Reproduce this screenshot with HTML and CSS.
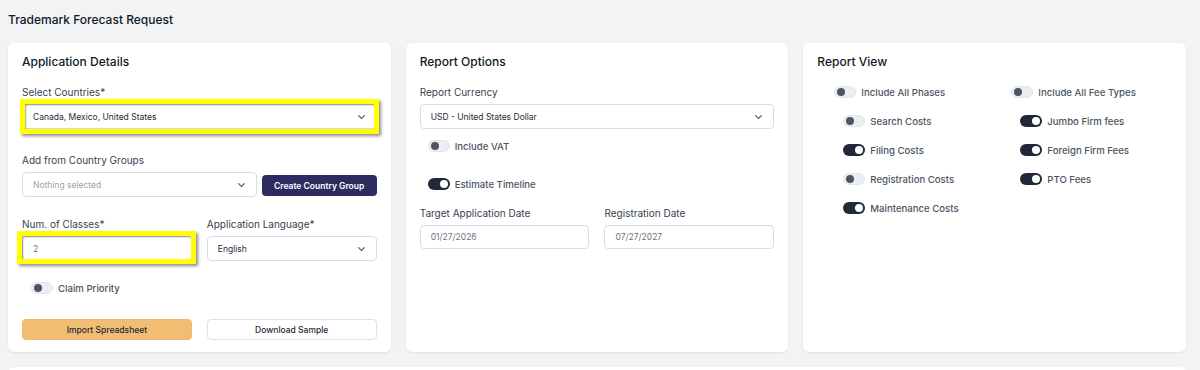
FILE: index.html
```html
<!DOCTYPE html>
<html>
<head>
<meta charset="utf-8">
<link rel="stylesheet" href="styles.css">
</head>
<body>
<div class="page">
  <h1 class="page-title">Trademark Forecast Request</h1>
  <div class="cards">
    <section class="card">
      <h2 class="card-title">Application Details</h2>
      <div class="field f-countries">
        <label class="label">Select Countries*</label>
        <div class="hl-wrap">
          <div class="select"><span>Canada, Mexico, United States</span><svg class="chev" viewBox="0 0 10 6"><path d="M1.5 1.2 5 4.6 8.5 1.2"/></svg></div>
          <div class="hl hl-a"></div>
        </div>
      </div>
      <div class="field f-groups">
        <label class="label">Add from Country Groups</label>
        <div class="row-groups">
          <div class="select grow"><span class="placeholder">Nothing selected</span><svg class="chev" viewBox="0 0 10 6"><path d="M1.5 1.2 5 4.6 8.5 1.2"/></svg></div>
          <button class="btn btn-navy">Create Country Group</button>
        </div>
      </div>
      <div class="two-col f-classes">
        <div class="field">
          <label class="label">Num. of Classes*</label>
          <div class="hl-wrap">
            <div class="input"><span class="val">2</span></div>
            <div class="hl hl-b"></div>
          </div>
        </div>
        <div class="field">
          <label class="label">Application Language*</label>
          <div class="select"><span>English</span><svg class="chev" viewBox="0 0 10 6"><path d="M1.5 1.2 5 4.6 8.5 1.2"/></svg></div>
        </div>
      </div>
      <div class="toggle-row f-claim"><span class="tg off"></span><span class="tg-label">Claim Priority</span></div>
      <div class="two-col f-buttons">
        <button class="btn btn-orange">Import Spreadsheet</button>
        <button class="btn btn-outline">Download Sample</button>
      </div>
    </section>

    <section class="card">
      <h2 class="card-title">Report Options</h2>
      <div class="field f-countries">
        <label class="label">Report Currency</label>
        <div class="select"><span>USD - United States Dollar</span><svg class="chev" viewBox="0 0 10 6"><path d="M1.5 1.2 5 4.6 8.5 1.2"/></svg></div>
      </div>
      <div class="toggle-row f-vat"><span class="tg off"></span><span class="tg-label">Include VAT</span></div>
      <div class="toggle-row f-timeline"><span class="tg on"></span><span class="tg-label">Estimate Timeline</span></div>
      <div class="two-col f-dates">
        <div class="field">
          <label class="label">Target Application Date</label>
          <div class="input date"><span class="val">01/27/2026</span></div>
        </div>
        <div class="field">
          <label class="label">Registration Date</label>
          <div class="input date"><span class="val">07/27/2027</span></div>
        </div>
      </div>
    </section>

    <section class="card">
      <h2 class="card-title">Report View</h2>
      <div class="view-grid">
        <div class="view-col">
          <div class="toggle-row"><span class="tg off"></span><span class="tg-label">Include All Phases</span></div>
          <div class="toggle-row sub"><span class="tg off"></span><span class="tg-label">Search Costs</span></div>
          <div class="toggle-row sub"><span class="tg on"></span><span class="tg-label">Filing Costs</span></div>
          <div class="toggle-row sub"><span class="tg off"></span><span class="tg-label">Registration Costs</span></div>
          <div class="toggle-row sub"><span class="tg on"></span><span class="tg-label">Maintenance Costs</span></div>
        </div>
        <div class="view-col">
          <div class="toggle-row"><span class="tg off"></span><span class="tg-label">Include All Fee Types</span></div>
          <div class="toggle-row sub"><span class="tg on"></span><span class="tg-label">Jumbo Firm fees</span></div>
          <div class="toggle-row sub"><span class="tg on"></span><span class="tg-label">Foreign Firm Fees</span></div>
          <div class="toggle-row sub"><span class="tg on"></span><span class="tg-label">PTO Fees</span></div>
        </div>
      </div>
    </section>
  </div>
  <section class="card card-bottom"></section>
</div>
</body>
</html>
```

FILE: styles.css
```css
* { box-sizing: border-box; }
html, body { margin: 0; padding: 0; }
body {
  background: #f2f3f5;
  font-family: Inter, "Noto Sans", "Liberation Sans", sans-serif;
  color: #1f2937;
  overflow: hidden;
}
.page { padding: 10px 14px 0 8px; }
.page-title {
  margin: 0;
  font-size: 12px;
  line-height: 20px;
  font-weight: 500;
  color: #111827;
}
.cards {
  margin-top: 13px;
  display: grid;
  grid-template-columns: repeat(3, 1fr);
  gap: 15px;
}
.card {
  background: #fff;
  border-radius: 6px;
  box-shadow: 0 1px 2px rgba(0,0,0,0.08);
  padding: 9px 14px 12px 14px;
  height: 309px;
}
.card-bottom { margin-top: 15px; height: 60px; }
.card-title {
  margin: 0;
  font-size: 12px;
  line-height: 20px;
  font-weight: 500;
  color: #111827;
}
.field { display: flex; flex-direction: column; }
.label {
  font-size: 10px;
  line-height: 16px;
  color: #374151;
  margin-bottom: 4px;
}
.f-countries { margin-top: 12px; }
.f-groups { margin-top: 23px; }
.f-classes { margin-top: 19px; }
.f-claim { margin-top: 19px; margin-left: 9px; }
.f-buttons { margin-top: 23px; }
.f-vat { margin-top: 9px; margin-left: 8px; }
.f-timeline { margin-top: 22px; margin-left: 8px; }
.f-dates { margin-top: 13px; }

.select, .input {
  height: 25px;
  border: 1px solid #d8dbe0;
  border-radius: 4px;
  background: #fff;
  display: flex;
  align-items: center;
  padding: 0 10px;
  font-size: 8.5px;
  color: #1f2937;
}
.select span { flex: 1; }
.placeholder { color: #9ca3af; }
.val { color: #6b7280; }
.input.date { height: 24px; }
.chev { width: 9px; height: 6px; fill: none; stroke: #4b5563; stroke-width: 1.3; flex: none; }
.row-groups { display: flex; align-items: center; gap: 5px; }
.grow { flex: 1; }
.btn {
  font-family: inherit;
  font-size: 8.5px;
  height: 21px;
  border-radius: 4px;
  cursor: pointer;
}
.btn-navy {
  background: #2d2b5f;
  color: #fff;
  border: none;
  font-weight: 600;
  width: 115px;
  margin-top: 2px;
}
.btn-orange {
  background: #f1bd73;
  border: 1px solid #efb86a;
  color: #1f2937;
  font-weight: 500;
}
.btn-outline {
  background: #fff;
  border: 1px solid #dfe2e6;
  color: #1f2937;
  font-weight: 500;
}
.two-col {
  display: grid;
  grid-template-columns: 1fr 1fr;
  gap: 15px;
}

.hl-wrap { position: relative; }
.hl {
  position: absolute;
  border: 5px solid #ffff00;
  box-shadow: 2px 2px 3px rgba(0,0,0,0.45), inset 1px 1px 2px rgba(0,0,0,0.35);
  pointer-events: none;
}
.hl-a { left: -2px; right: -2px; top: -5px; bottom: -5px; }
.hl-b { left: -5px; right: -4px; top: -5px; bottom: -3px; }

.toggle-row {
  display: flex;
  align-items: center;
  height: 16px;
  gap: 5px;
}
.tg {
  position: relative;
  width: 22px;
  height: 12px;
  border-radius: 6px;
  flex: none;
}
.tg::after {
  content: "";
  position: absolute;
  top: 2px;
  width: 8px;
  height: 8px;
  border-radius: 50%;
}
.tg.off { background: #eceef1; border: 1px solid #e2e5e9; }
.tg.off::after { left: 2px; top: 1px; background: #4b5563; }
.tg.on { background: #1f2937; }
.tg.on::after { right: 2px; background: #fff; }
.tg-label {
  font-size: 9.6px;
  font-weight: 500;
  color: #4b5563;
}
.view-grid {
  margin-top: 12px;
  display: grid;
  grid-template-columns: 177px 1fr;
  padding-left: 17px;
}
.view-col { display: flex; flex-direction: column; gap: 13px; }
.view-col .sub { margin-left: 9px; }
```
